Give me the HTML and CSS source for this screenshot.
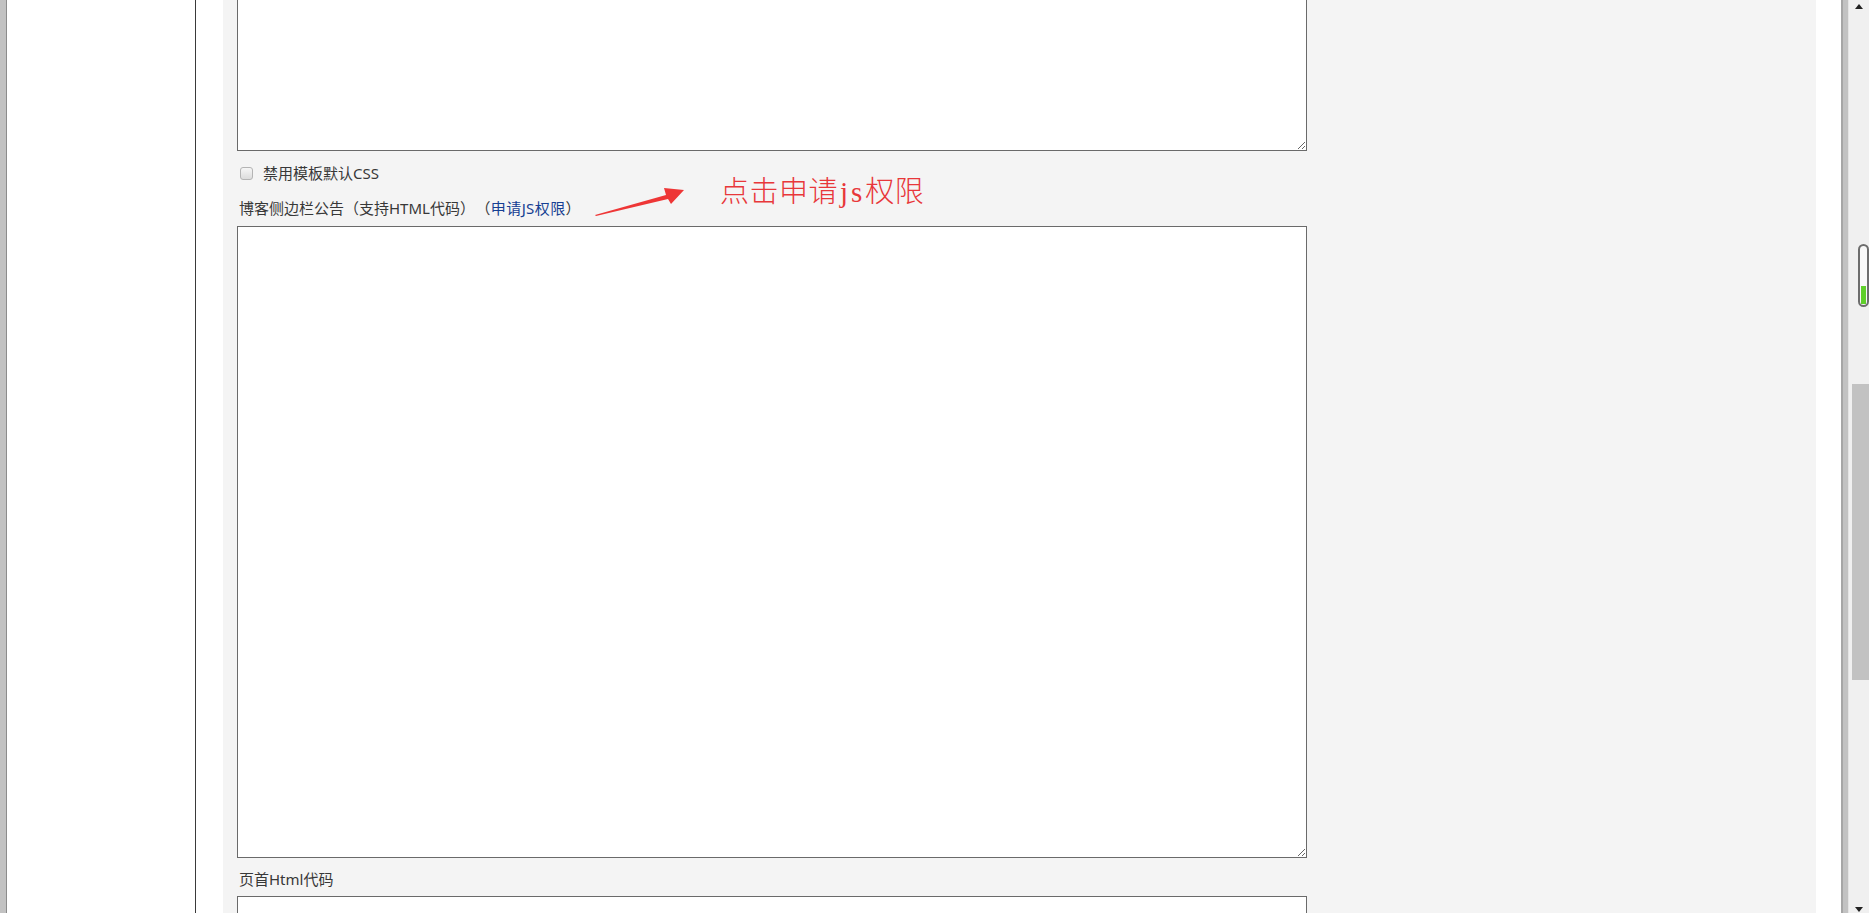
FILE: index.html
```html
<!DOCTYPE html>
<html lang="zh-CN">
<head>
<meta charset="utf-8">
<title>博客设置</title>
<link rel="stylesheet" href="styles.css">
</head>
<body>
<div class="frame">
  <div class="edge-left"></div>
  <div class="sidebar"></div>
  <div class="main">
    <div class="panel">
      <textarea class="code-box top-box"></textarea>
      <label class="check-row">
        <input type="checkbox" class="check">
        <span>禁用模板默认CSS</span>
      </label>
      <div class="field-label">博客侧边栏公告（支持HTML代码）<span class="paren">（<a href="#" class="js-link">申请JS权限</a>）</span></div>
      <textarea class="code-box side-box"></textarea>
      <div class="field-label label-head">页首Html代码</div>
      <textarea class="code-box head-box"></textarea>

      <svg class="note-arrow" width="100" height="40" viewBox="0 0 100 40">
        <polygon points="5,32 76,12 74,5 94,7 81,21 78,16 6,33" fill="#ee3636"/>
      </svg>
      <div class="note-text">点击申请<span class="note-latin">js</span>权限</div>
    </div>
  </div>
  <div class="right-gap"></div>
  <div class="edge-right"></div>
  <div class="scrollbar">
    <div class="arrow arrow-up"></div>
    <div class="thumb"></div>
    <div class="spacer"></div>
    <div class="arrow arrow-down"></div>
    <div class="pill"><div class="pill-fill"></div></div>
  </div>
</div>
</body>
</html>
```
FILE: styles.css
```css
html, body {
  margin: 0;
  padding: 0;
  width: 1869px;
  height: 913px;
  overflow: hidden;
  background: #ffffff;
}

.frame {
  display: flex;
  width: 1869px;
  height: 913px;
  font-family: "Noto Sans", "Noto Sans CJK SC", sans-serif;
  font-size: 15px;
  color: #383838;
}

.edge-left {
  width: 6px;
  background: #c2c2c2;
  border-right: 1px solid #8c8c8c;
  flex: none;
}

.sidebar {
  width: 188px;
  flex: none;
  background: #ffffff;
  border-right: 1px solid #3a3a3a;
}

.main {
  width: 1620px;
  flex: none;
  padding-left: 27px;
  box-sizing: border-box;
  background: #ffffff;
}

.panel {
  position: relative;
  width: 1593px;
  height: 913px;
  overflow: hidden;
  background: #f4f4f4;
  padding-left: 14px;
  box-sizing: border-box;
  display: flex;
  flex-direction: column;
  align-items: flex-start;
}

.code-box {
  display: block;
  width: 1070px;
  box-sizing: border-box;
  border: 1px solid #6a6a6a;
  background: #ffffff;
  margin: 0;
  padding: 2px;
  flex: none;
  outline: none;
}

.top-box {
  margin-top: -100px;
  height: 251px;
}

.side-box {
  margin-top: 4px;
  height: 632px;
}

.head-box {
  height: 200px;
}

.check-row {
  display: flex;
  align-items: center;
  height: 27px;
  margin-top: 8px;
  flex: none;
}

.check {
  -webkit-appearance: none;
  appearance: none;
  width: 13px;
  height: 13px;
  margin: 2px 10px 0 3px;
  box-sizing: border-box;
  border: 1px solid #b4b4b4;
  border-radius: 3px;
  background: linear-gradient(#f6f6f6, #dcdcdc);
}

.field-label {
  height: 27px;
  line-height: 27px;
  margin-top: 9px;
  padding-left: 2px;
  flex: none;
  white-space: nowrap;
}

.label-head {
  margin-top: 8px;
  margin-bottom: 3px;
}

.paren {
  margin-left: 8px;
  letter-spacing: 0.4px;
}

.js-link {
  color: #163f93;
  text-decoration: none;
}

.note-arrow {
  position: absolute;
  left: 367px;
  top: 183px;
}

.note-text {
  position: absolute;
  left: 497px;
  top: 169px;
  font-family: "Noto Sans CJK SC", serif;
  font-weight: 300;
  font-size: 29px;
  line-height: 40px;
  letter-spacing: 0.5px;
  color: #e8373a;
  white-space: nowrap;
}

.note-latin {
  font-family: "Liberation Serif", serif;
  letter-spacing: 3px;
  margin-left: 2px;
}

.right-gap {
  width: 25px;
  flex: none;
  background: #ffffff;
}

.edge-right {
  width: 7px;
  flex: none;
  background: linear-gradient(to right, #a6a6a6 0, #a6a6a6 2px, #c2c2c2 2px, #c2c2c2 7px);
  border-right: 1px solid #e4e4e4;
}

.scrollbar {
  position: relative;
  width: 20px;
  flex: none;
  background: #f0f0f0;
  display: flex;
  flex-direction: column;
  align-items: center;
}

.arrow {
  height: 20px;
  width: 100%;
  flex: none;
  display: flex;
  justify-content: center;
  align-items: center;
}

.arrow-up::before {
  content: "";
  border-left: 4px solid transparent;
  border-right: 4px solid transparent;
  border-bottom: 5px solid #222;
  margin-top: -8px;
}

.arrow-down::before {
  content: "";
  border-left: 4px solid transparent;
  border-right: 4px solid transparent;
  border-top: 5px solid #222;
  margin-top: 12px;
}

.thumb {
  width: 17px;
  height: 296px;
  margin-top: 364px;
  margin-left: 2px;
  background: #c2c2c2;
  flex: none;
}

.spacer {
  flex: 1;
}

.pill {
  position: absolute;
  left: 9px;
  top: 244px;
  width: 11px;
  height: 63px;
  box-sizing: border-box;
  border: 2px solid #6d6d6d;
  border-radius: 6px;
  background: #f8f8f8;
}

.pill-fill {
  position: absolute;
  left: 1px;
  right: 1px;
  bottom: 1px;
  height: 18px;
  background: #5fcf2a;
}
```
